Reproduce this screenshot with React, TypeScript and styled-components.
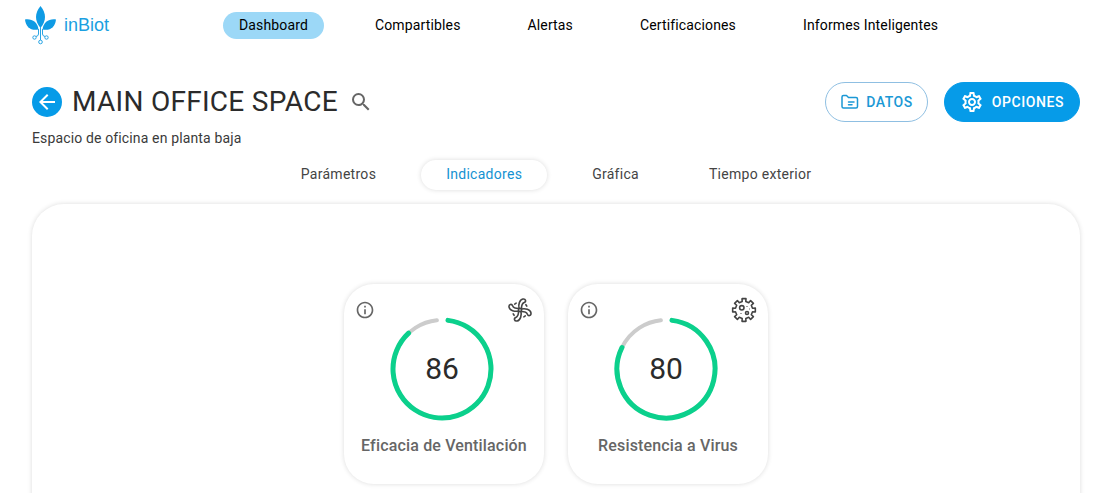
import React from "react";
import styled, { createGlobalStyle } from "styled-components";
import { MdArrowBack, MdSearch, MdInfoOutline, MdOutlineSettings } from "react-icons/md";

const GlobalStyle = createGlobalStyle`
  *, *::before, *::after { box-sizing: border-box; }
  body {
    margin: 0;
    background: #fff;
    color: #333;
    font-family: Roboto, "Liberation Sans", sans-serif;
    font-size: 14px;
    overflow-x: hidden;
  }
  button { font-family: inherit; cursor: pointer; }
`;

const Header = styled.header`
  display: flex;
  align-items: center;
  height: 50px;
  padding: 0 24px;
`;

const Logo = styled.a`
  display: flex;
  align-items: center;
  gap: 7px;
  width: 199px;
  flex: none;
  color: #1ba0e1;
  font-family: "Liberation Sans", sans-serif;
  font-size: 18px;
  line-height: 20px;
  text-decoration: none;
`;

const Nav = styled.nav`
  display: flex;
  gap: 35px;
`;

const NavLink = styled.a<{ $active?: boolean }>`
  padding: 0 16px;
  border-radius: 14px;
  background: ${(p) => (p.$active ? "#9cd8f7" : "transparent")};
  color: #000;
  font-size: 14px;
  line-height: 27px;
  letter-spacing: 0.01em;
  text-decoration: none;
  white-space: nowrap;
`;

const Main = styled.main`
  padding: 32px 39px 0 32px;
`;

const TitleBar = styled.div`
  display: flex;
  justify-content: space-between;
  align-items: center;
`;

const TitleGroup = styled.div`
  display: flex;
  align-items: center;
`;

const BackButton = styled.button`
  display: flex;
  align-items: center;
  justify-content: center;
  width: 30px;
  height: 30px;
  padding: 0;
  border: 0;
  border-radius: 50%;
  background: #069be8;
  color: #fff;
`;

const Title = styled.h1`
  margin: 0 11px 0 10px;
  color: #2b2b2b;
  font-size: 28px;
  line-height: 40px;
  font-weight: 400;
  letter-spacing: 0.01em;
  white-space: nowrap;
`;

const IconButton = styled.button`
  display: flex;
  padding: 0;
  border: 0;
  background: none;
  color: #666;
`;

const Actions = styled.div`
  display: flex;
  gap: 16px;
`;

const ActionButton = styled.button<{ $filled?: boolean }>`
  display: flex;
  align-items: center;
  gap: ${(p) => (p.$filled ? 8 : 6)}px;
  height: 40px;
  padding: 0 ${(p) => (p.$filled ? 15 : 14)}px;
  border: 1px solid ${(p) => (p.$filled ? "#069be8" : "#8fbfe2")};
  border-radius: 20px;
  background: ${(p) => (p.$filled ? "#069be8" : "#fff")};
  color: ${(p) => (p.$filled ? "#fff" : "#1b98d5")};
  font-size: 14px;
  font-weight: 500;
  letter-spacing: 0.04em;
`;

const Subtitle = styled.p`
  margin: 6px 0 0;
  color: #3a3a3a;
  font-size: 14px;
  line-height: 20px;
  letter-spacing: 0.01em;
`;

const Tabs = styled.div`
  display: flex;
  justify-content: center;
  gap: 20px;
  margin-top: 12px;
`;

const Tab = styled.button<{ $active?: boolean }>`
  height: 30px;
  padding: 0 25px 2px;
  border: 0;
  border-radius: 15px;
  background: #fff;
  box-shadow: ${(p) => (p.$active ? "0 0 5px rgba(0, 0, 0, 0.14)" : "none")};
  color: ${(p) => (p.$active ? "#1492d2" : "#444")};
  font-size: 14px;
  letter-spacing: 0.02em;
`;

const Panel = styled.section`
  display: flex;
  justify-content: center;
  gap: 24px;
  margin-top: 14px;
  padding: 80px 24px;
  border-radius: 32px;
  background: #fff;
  box-shadow: 0 0 5px rgba(0, 0, 0, 0.14);
`;

const Card = styled.article`
  display: flex;
  flex-direction: column;
  align-items: center;
  width: 200px;
  height: 200px;
  border-radius: 30px;
  background: #fff;
  box-shadow: 0 0 5px rgba(0, 0, 0, 0.14);
`;

const CardTop = styled.div`
  display: flex;
  justify-content: space-between;
  align-items: center;
  align-self: stretch;
  height: 33px;
  padding: 18px 11px 0;
`;

const Gauge = styled.div`
  display: grid;
  place-items: center;
  width: 104px;
  height: 104px;
  margin-right: 4px;

  > * { grid-area: 1 / 1; }
`;

const GaugeValue = styled.span`
  color: #2b2b2b;
  font-size: 30px;
  line-height: 36px;
`;

const CardLabel = styled.h2`
  margin: 13px 0 0;
  color: #666;
  font-size: 16px;
  line-height: 24px;
  font-weight: 500;
  letter-spacing: 0.01em;
  white-space: nowrap;
`;

const point = (deg: number) => {
  const a = (deg * Math.PI) / 180;
  return `${52 + 49 * Math.sin(a)} ${52 - 49 * Math.cos(a)}`;
};

const arc = (from: number, to: number) =>
  `M${point(from)}A49 49 0 ${to - from > 180 ? 1 : 0} 1 ${point(to)}`;

const Ring = ({ end }: { end: number }) => (
  <svg width="104" height="104" viewBox="0 0 104 104" fill="none" strokeLinecap="round" aria-hidden="true">
    <path d={arc(7, 354)} stroke="#ccc" strokeWidth="4" />
    <path d={arc(7, end)} stroke="#0bd08c" strokeWidth="5" />
  </svg>
);

const LogoMark = () => (
  <svg width="33" height="40" viewBox="0 0 33 40" aria-hidden="true">
    <g fill="#0f9be4">
      <path d="M16.500 1C10.500 8 10.500 16 16.500 23C22.500 16 22.500 8 16.500 1Z" />
      <path d="M1 14.500C2 22.500 7 26 14.500 24.500C13.500 17 8 13.500 1 14.500Z" />
      <path d="M32 14.500C31 22.500 26 26 18.500 24.500C19.500 17 25 13.500 32 14.500Z" />
    </g>
    <g fill="none" stroke="#2aa5e4" strokeWidth="1">
      <path d="M16.500 22V35M14.500 24V29Q14.500 31 12 31.500M18.500 24V29Q18.500 31 21 31.500" />
      <circle cx="10.500" cy="32.500" r="1.700" />
      <circle cx="22.500" cy="32.500" r="1.700" />
      <circle cx="16.500" cy="37" r="1.800" />
    </g>
  </svg>
);

const FolderIcon = () => (
  <svg width="20" height="20" viewBox="0 0 20 20" fill="none" stroke="currentColor" strokeWidth="1.500" strokeLinejoin="round" strokeLinecap="round" aria-hidden="true">
    <path d="M2 14.500V5Q2 3.500 3.500 3.500H6.500L8.500 5.500H16Q17.500 5.500 17.500 7V14.500Q17.500 16 16 16H3.500Q2 16 2 14.500Z" />
    <path d="M8.500 10H14M8.500 12.700H12" />
  </svg>
);

const FanIcon = () => (
  <svg width="26" height="26" viewBox="0 0 26 26" fill="none" stroke="#444" strokeWidth="1.600" strokeLinecap="round" aria-hidden="true">
    {[3, 93, 183, 273].map((r) => (
      <g key={r} transform={`rotate(${r} 13 13)`}>
        <path d="M12 11.500C10.800 8 12 2.700 15.300 1.900C18.200 1.300 19 4.400 16.800 5.400C14.800 6.300 14.300 9 14.400 11.400" />
        <path d="M18.600 7.400L19.600 8.800" />
      </g>
    ))}
    <circle cx="13" cy="13" r="1.600" />
  </svg>
);

const gearOutline = (() => {
  const at = (r: number, deg: number) => {
    const a = (deg * Math.PI) / 180;
    return `${13 + r * Math.sin(a)} ${13 - r * Math.cos(a)}`;
  };
  const teeth = [0, 45, 90, 135, 180, 225, 270, 315].map((d) =>
    [at(8.7, d - 12), at(11.5, d - 10), at(11.5, d + 10), at(8.7, d + 12)].join("L")
  );
  return `M${teeth.join("L")}Z`;
})();

const VirusIcon = () => (
  <svg width="26" height="26" viewBox="0 0 26 26" fill="none" stroke="#444" strokeWidth="1.600" strokeLinejoin="round" aria-hidden="true">
    <path d={gearOutline} />
    <circle cx="10.800" cy="10.800" r="2.200" />
    <circle cx="16" cy="16" r="1.500" />
    <path d="M15.500 9.500h1M9.500 16.500h1M18 12h.8" strokeWidth="1" />
  </svg>
);

const navItems = ["Dashboard", "Compartibles", "Alertas", "Certificaciones", "Informes Inteligentes"];
const tabItems = ["Parámetros", "Indicadores", "Gráfica", "Tiempo exterior"];
const indicators = [
  { label: "Eficacia de Ventilación", value: 86, end: 317, icon: <FanIcon /> },
  { label: "Resistencia a Virus", value: 80, end: 296, icon: <VirusIcon /> },
];

export default function App() {
  return (
    <>
      <GlobalStyle />
      <Header>
        <Logo href="#">
          <LogoMark />
          inBiot
        </Logo>
        <Nav>
          {navItems.map((item, i) => (
            <NavLink key={item} href="#" $active={i === 0}>
              {item}
            </NavLink>
          ))}
        </Nav>
      </Header>
      <Main>
        <TitleBar>
          <TitleGroup>
            <BackButton aria-label="Volver">
              <MdArrowBack size={24} />
            </BackButton>
            <Title>MAIN OFFICE SPACE</Title>
            <IconButton aria-label="Buscar">
              <MdSearch size={24} />
            </IconButton>
          </TitleGroup>
          <Actions>
            <ActionButton>
              <FolderIcon />
              DATOS
            </ActionButton>
            <ActionButton $filled>
              <MdOutlineSettings size={24} />
              OPCIONES
            </ActionButton>
          </Actions>
        </TitleBar>
        <Subtitle>Espacio de oficina en planta baja</Subtitle>
        <Tabs role="tablist">
          {tabItems.map((item, i) => (
            <Tab key={item} role="tab" aria-selected={i === 1} $active={i === 1}>
              {item}
            </Tab>
          ))}
        </Tabs>
        <Panel>
          {indicators.map(({ label, value, end, icon }) => (
            <Card key={label}>
              <CardTop>
                <IconButton aria-label="Información">
                  <MdInfoOutline size={20} />
                </IconButton>
                {icon}
              </CardTop>
              <Gauge>
                <Ring end={end} />
                <GaugeValue>{value}</GaugeValue>
              </Gauge>
              <CardLabel>{label}</CardLabel>
            </Card>
          ))}
        </Panel>
      </Main>
    </>
  );
}
